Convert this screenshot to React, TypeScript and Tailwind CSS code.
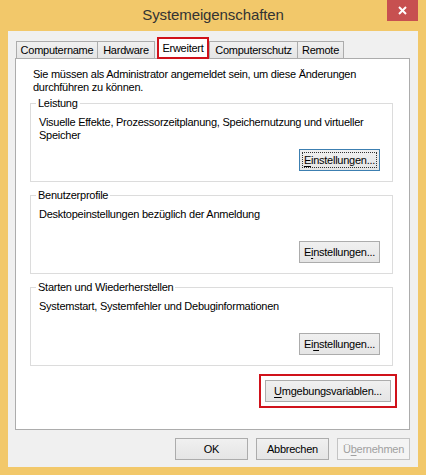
import React from 'react';

type BtnProps = {
  children: React.ReactNode;
  className?: string;
  focused?: boolean;
  disabled?: boolean;
};

// Windows 8 style push button
const WinButton: React.FC<BtnProps> = ({ children, className = '', focused = false, disabled = false }) => (
  <button
    type="button"
    disabled={disabled}
    className={`flex h-[22px] items-center justify-center border bg-linear-to-b leading-none ${
      disabled
        ? 'border-[#c4c4c4] from-[#f4f4f4] to-[#f4f4f4] text-[#a0a0a0]'
        : focused
          ? 'border-[#3c7fb1] from-[#f0f0f0] to-[#e5e5e5] text-black outline-1 outline-dotted outline-[#333] outline-offset-[-4px]'
          : 'border-[#acacac] from-[#f0f0f0] to-[#e5e5e5] text-black'
    } ${className}`}
  >
    {children}
  </button>
);

const Key: React.FC<{ children: React.ReactNode }> = ({ children }) => (
  <span className="underline decoration-1 underline-offset-[2px]">{children}</span>
);

type GroupProps = {
  title: string;
  children: React.ReactNode;
  button: React.ReactNode;
  className?: string;
};

const Group: React.FC<GroupProps> = ({ title, children, button, className = '' }) => (
  <fieldset className={`ml-[14px] mr-[16px] border border-[#dcdcdc] pl-[8px] pr-[12px] pt-[6px] pb-[10px] ${className}`}>
    <legend className="-ml-[3px] px-[2px] leading-[13px]">{title}</legend>
    <div className="h-[26px] whitespace-nowrap leading-[13px]">{children}</div>
    <div className="mt-[7px] flex justify-end">{button}</div>
  </fieldset>
);

export default function App() {
  return (
    <div className="flex h-[475px] w-[426px] flex-col bg-[#f2c86a] font-['Liberation_Sans',Arial,sans-serif] text-[11px] tracking-[-0.25px] text-black">
      {/* Title bar */}
      <div className="relative flex h-[31px] shrink-0 items-center justify-center">
        <span className="text-[15px] tracking-[-0.1px] text-[#333]">Systemeigenschaften</span>
        <div className="absolute right-[8px] top-0 flex h-[21px] w-[31px] items-center justify-center bg-[#c75050]">
          <svg width="9" height="9" viewBox="0 0 9 9" fill="none" stroke="white" strokeWidth="2">
            <line x1="1" y1="1" x2="8" y2="8" />
            <line x1="8" y1="1" x2="1" y2="8" />
          </svg>
        </div>
      </div>

      {/* Client area */}
      <div className="mx-[8px] mb-[8px] flex flex-1 flex-col bg-[#f0f0f0]">
        {/* Tabs */}
        <div className="ml-[7px] flex h-[21px] items-end pt-0 mt-[6px]">
          <div className="ml-[1px] flex h-[17px] w-[82px] items-center justify-center border border-b-0 border-[#acacac] bg-linear-to-b from-[#f0f0f0] to-[#e5e5e5]">
            Computername
          </div>
          <div className="-ml-[1px] flex h-[17px] w-[58px] items-center justify-center border border-b-0 border-[#acacac] bg-linear-to-b from-[#f0f0f0] to-[#e5e5e5]">
            Hardware
          </div>
          <div className="relative z-10 -mb-[1px] ml-[2px] flex h-[22px] w-[52px] items-center justify-center border-2 border-[#d0121b] bg-white">
            Erweitert
          </div>
          <div className="flex h-[17px] w-[89px] items-center justify-center border border-b-0 border-[#acacac] bg-linear-to-b from-[#f0f0f0] to-[#e5e5e5]">
            Computerschutz
          </div>
          <div className="-ml-[1px] flex h-[17px] w-[47px] items-center justify-center border border-b-0 border-[#acacac] bg-linear-to-b from-[#f0f0f0] to-[#e5e5e5]">
            Remote
          </div>
        </div>

        {/* Tab page */}
        <div className="ml-[7px] w-[395px] border border-[#acacac] bg-white pt-[9px] pb-[21px]">
          <p className="whitespace-nowrap pl-[17px] leading-[13px]">
            Sie müssen als Administrator angemeldet sein, um diese Änderungen
            <br />
            durchführen zu können.
          </p>

          <Group
            title="Leistung"
            className="mt-[3px]"
            button={
              <WinButton focused className="w-[81px]">
                <Key>E</Key>instellungen...
              </WinButton>
            }
          >
            Visuelle Effekte, Prozessorzeitplanung, Speichernutzung und virtueller
            <br />
            Speicher
          </Group>

          <Group
            title="Benutzerprofile"
            className="mt-[7px]"
            button={
              <WinButton className="w-[81px]">
                E<Key>i</Key>nstellungen...
              </WinButton>
            }
          >
            Desktopeinstellungen bezüglich der Anmeldung
          </Group>

          <Group
            title="Starten und Wiederherstellen"
            className="mt-[7px]"
            button={
              <WinButton className="w-[81px]">
                Ei<Key>n</Key>stellungen...
              </WinButton>
            }
          >
            Systemstart, Systemfehler und Debuginformationen
          </Group>

          <div className="mr-[12px] mt-[8px] flex justify-end">
            <div className="border-2 border-[#d0121b] p-[4px]">
              <WinButton className="w-[126px]">
                <Key>U</Key>mgebungsvariablen...
              </WinButton>
            </div>
          </div>
        </div>

        {/* Dialog buttons */}
        <div className="mt-[8px] flex justify-end gap-[8px] pr-[8px]">
          <WinButton className="w-[73px]">OK</WinButton>
          <WinButton className="w-[73px]">Abbrechen</WinButton>
          <WinButton disabled className="w-[73px]">
            Ü<Key>b</Key>ernehmen
          </WinButton>
        </div>
      </div>
    </div>
  );
}
